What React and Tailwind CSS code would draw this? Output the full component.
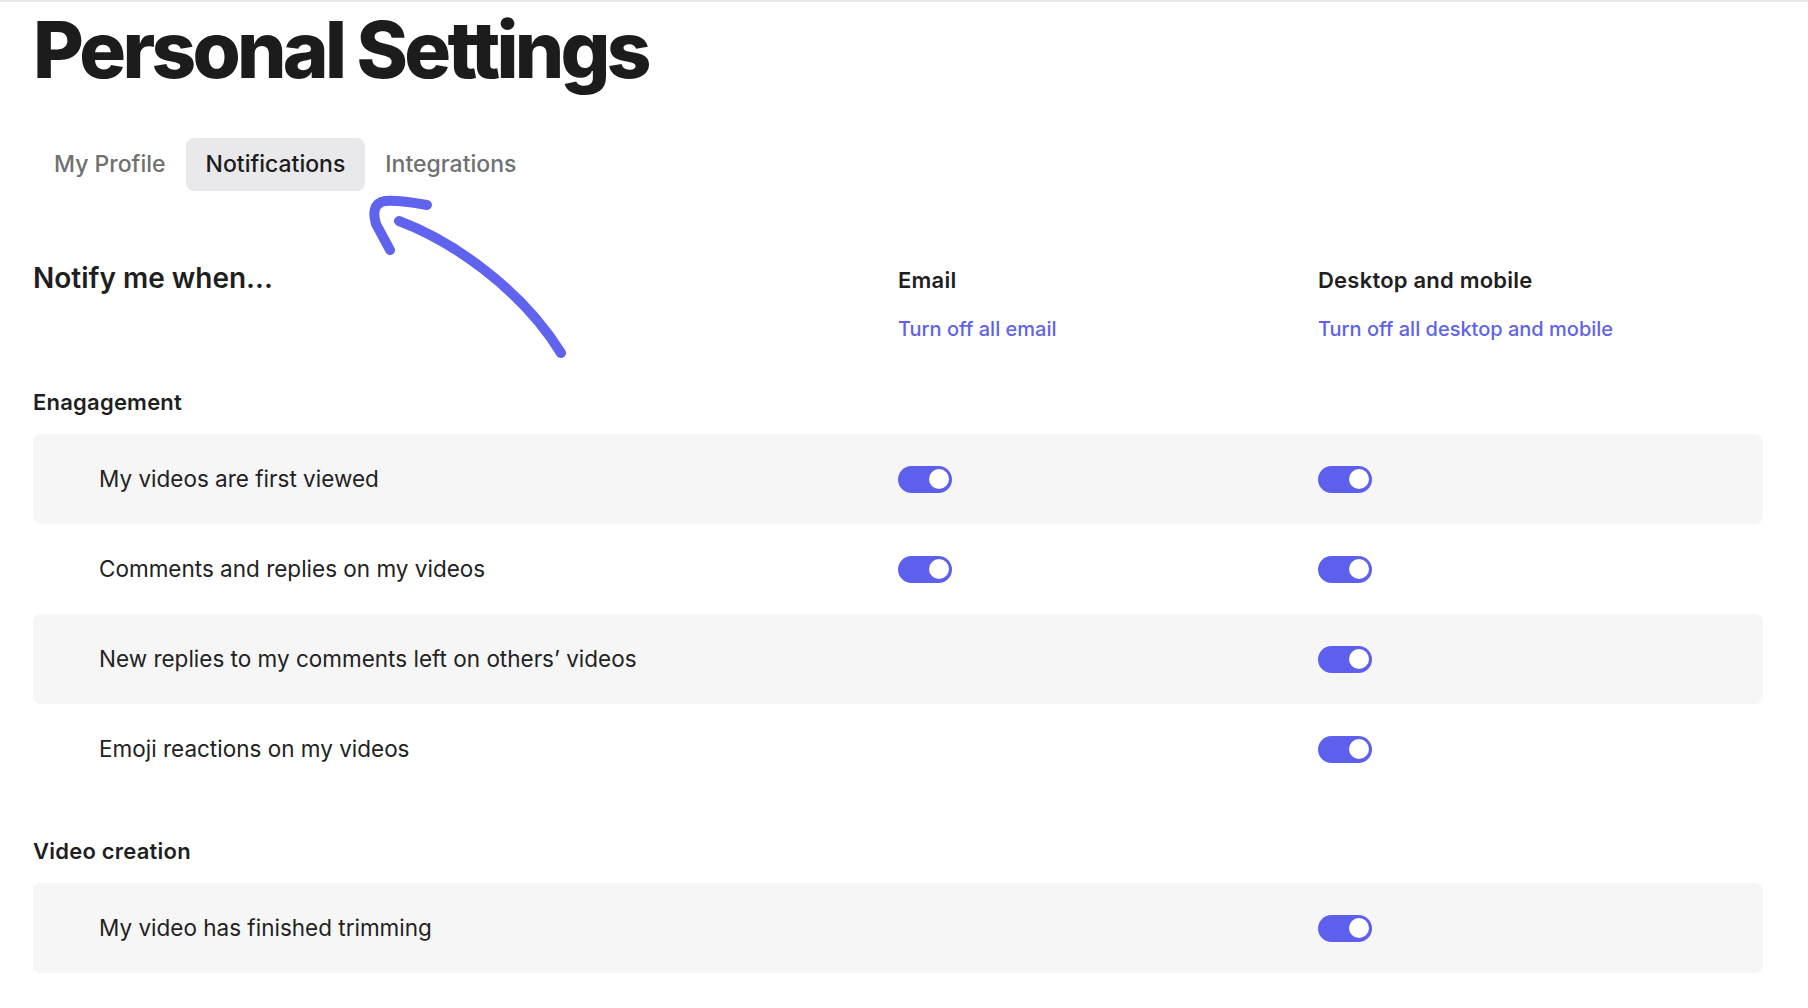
import React from "react";

const font = { fontFamily: "Inter, 'Noto Sans', sans-serif" };

function Toggle() {
  return (
    <div className="w-[54px] h-[27px] rounded-full bg-[#5d60ec] flex items-center justify-end pr-[3px]">
      <div className="w-[20px] h-[20px] rounded-full bg-white" />
    </div>
  );
}

function Row({ label, email, desktop, shaded }) {
  return (
    <div
      className={
        "grid grid-cols-[865px_420px_1fr] items-center h-[90px] rounded-lg " +
        (shaded ? "bg-[#f6f6f6]" : "bg-white")
      }
    >
      <div className="pl-[66px] text-[22.5px] text-[#222222]">{label}</div>
      <div>{email ? <Toggle /> : null}</div>
      <div>{desktop ? <Toggle /> : null}</div>
    </div>
  );
}

function Section({ title, children }) {
  return (
    <div className="flex flex-col">
      <div className="text-[22px] leading-[26px] font-semibold text-[#1f1f1f] mb-[19px] tracking-[0.01em]">{title}</div>
      <div className="flex flex-col">{children}</div>
    </div>
  );
}

export default function App() {
  return (
    <div style={font} className="relative w-full min-h-screen bg-white border-t-2 border-[#e8e8e8] pl-[33px] pr-[45px] pt-[9px] pb-10">
      <h1 className="text-[78px] leading-none font-extrabold tracking-[-0.048em] text-[#1c1c1c]">Personal Settings</h1>

      <div className="flex mt-[49px] ml-[1px]">
        <div className="h-[53px] px-5 flex items-center rounded-lg text-[23px] font-medium text-[#707070]">My Profile</div>
        <div className="h-[53px] px-5 flex items-center rounded-lg text-[23px] font-medium text-[#1c1c1c] bg-[#e9e9eb]">Notifications</div>
        <div className="h-[53px] px-5 flex items-center rounded-lg text-[23px] font-medium text-[#707070]">Integrations</div>
      </div>

      <div className="grid grid-cols-[865px_420px_1fr] items-baseline mt-[70px]">
        <div className="text-[28px] leading-[34px] font-semibold text-[#1f1f1f]">Notify me when...</div>
        <div className="flex flex-col">
          <div className="text-[22px] leading-[26px] font-semibold text-[#1f1f1f] tracking-[0.01em]">Email</div>
          <div className="mt-[24px] text-[20px] leading-[24px] font-medium text-[#5f63ea]">Turn off all email</div>
        </div>
        <div className="flex flex-col">
          <div className="text-[22px] leading-[26px] font-semibold text-[#1f1f1f] tracking-[0.01em]">Desktop and mobile</div>
          <div className="mt-[24px] text-[20px] leading-[24px] font-medium text-[#5f63ea]">Turn off all desktop and mobile</div>
        </div>
      </div>

      <div className="flex flex-col gap-[44px] mt-[48px]">
        <Section title="Enagagement">
          <Row label="My videos are first viewed" email desktop shaded />
          <Row label="Comments and replies on my videos" email desktop />
          <Row label="New replies to my comments left on others’ videos" desktop shaded />
          <Row label="Emoji reactions on my videos" desktop />
        </Section>
        <Section title="Video creation">
          <Row label="My video has finished trimming" desktop shaded />
        </Section>
      </div>

      <svg className="absolute left-0 top-0 pointer-events-none" width="700" height="400" viewBox="0 0 700 400" fill="none">
        <path
          d="M427 203 C410 200 394 198 385 199 C373 201 373 212 376 222 L390 248"
          stroke="#5f63ee"
          strokeWidth="10"
          strokeLinecap="round"
          strokeLinejoin="round"
        />
        <path d="M399 219 C450 238 520 285 561 351" stroke="#5f63ee" strokeWidth="10" strokeLinecap="round" />
      </svg>
    </div>
  );
}
